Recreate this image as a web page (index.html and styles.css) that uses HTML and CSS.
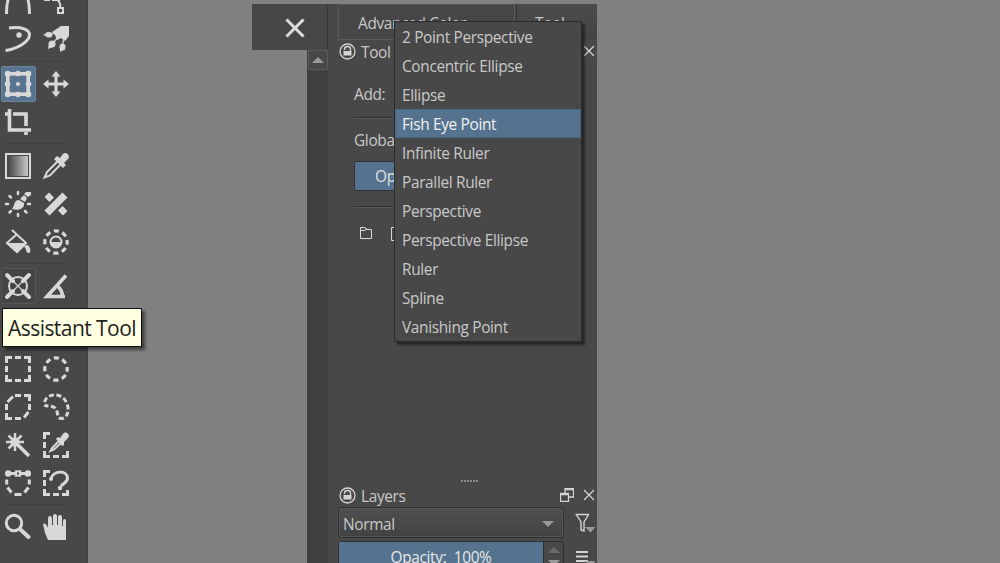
FILE: index.html
```
<!DOCTYPE html>
<html lang="en">
<head>
    <meta charset="utf-8">
    <title>Assistant Tool</title>
    <link rel="stylesheet" href="styles.css">
</head>
<body>
<div class="workspace">

    <!-- Toolbox -->
    <div class="toolbox">
        <div class="tool-group">
            <button class="tool"><svg viewBox="-13 -13 26 26"><path d="M-11.500 13C-11.5-7-6-11 0-11S11.500-7 11.500 13"/></svg></button>
            <button class="tool"><svg viewBox="-13 -13 26 26"><path d="M-12-1.500h6M-4-1.500h8"/><path class="mid" d="M2-1Q4.500 2 4.500 7"/><rect class="mid" x="2" y="7" width="5" height="5"/></svg></button>
            <button class="tool"><svg viewBox="-13 -13 26 26"><path d="M-9-11C4-13 11.500-9 11.500-4.500 11.500 3-1 10-12.500 11.500"/><circle class="fill" cx="1" cy="-4" r="2.700"/></svg></button>
            <button class="tool">
                <svg viewBox="-13 -13 26 26">
                    <path class="fill" d="M5-13H13V-3L9 2 5-1 1 1-1-4-4-7Z"/>
                    <path class="thin" d="M1-7L-4-5M3-3L-2 3M8-1L6.500 6"/>
                    <ellipse class="fill" cx="-7" cy="-4.200" rx="3.500" ry="2.800"/><path class="fill" d="M-13-4L-8-7V-2Z"/>
                    <ellipse class="fill" cx="-4" cy="5" rx="3.500" ry="3.500"/><path class="fill" d="M-8 10L-7 4-3 8Z"/>
                    <ellipse class="fill" cx="6.500" cy="8" rx="3" ry="3.500"/><path class="fill" d="M4 13L4 8 9 10Z"/>
                </svg>
            </button>
        </div>
        <div class="tool-group">
            <button class="tool selected"><svg viewBox="-13 -13 26 26"><rect class="frame" x="-10.200" y="-10.200" width="20.400" height="20.400"/><g class="fill"><circle cx="-10.300" cy="-10.300" r="3"/><circle cx="0" cy="-10.500" r="2.800"/><circle cx="10.300" cy="-10.300" r="3"/><circle cx="-10.500" cy="0" r="2.800"/><circle cx="10.500" cy="0" r="2.800"/><circle cx="-10.300" cy="10.300" r="3"/><circle cx="0" cy="10.500" r="2.800"/><circle cx="10.300" cy="10.300" r="3"/><circle cx="0" cy="0" r="2.100"/></g></svg></button>
            <button class="tool"><svg viewBox="-13 -13 26 26"><path d="M0-9V9M-9 0H9"/><path class="fill" d="M0-13L4.500-7.500H-4.500ZM0 13L4.500 7.500H-4.500ZM-13 0L-7.500-4.500V4.500ZM13 0L7.500-4.500V4.500Z"/></svg></button>
            <button class="tool"><svg viewBox="-13 -13 26 26"><path class="frame" d="M-8.500-13V8H13M-13-8H-10M-5-8H8V4M8 10V13"/></svg></button>
        </div>
        <div class="tool-group">
            <button class="tool">
                <svg viewBox="-13 -13 26 26">
                    <defs><linearGradient id="fade"><stop offset="0" stop-color="#454545"/><stop offset="1" stop-color="#c8c8c8"/></linearGradient></defs>
                    <rect class="mid" x="-12" y="-12" width="24" height="24"/>
                    <rect class="gradient" x="-10" y="-10" width="20" height="20" fill="url(#fade)"/>
                </svg>
            </button>
            <button class="tool"><svg viewBox="-13 -13 26 26"><path class="mid" d="M2-5L-9 6-11.500 11.500-6 9.500 5-2"/><path class="fill" d="M-2-7L1-10 4-8 7-12C10-15 15-10 12-7L8-3 10-1 7 2Z"/></svg></button>
            <button class="tool"><svg viewBox="-13 -13 26 26"><path class="dots" d="M0-10V-12M-7-6.500L-8.500-8M-10 0H-12M-7 7L-8.500 8.500M0 10V12M7 7L8.500 8.500M10 0H12"/><path class="fill" d="M-6 5C-3 1-4-4 1-4L6-1C7 5 0 7-6 5ZM2-5L6-9 9-6 7-2ZM6-10L8-12H13V-9L10-7Z"/></svg></button>
            <button class="tool"><svg viewBox="-13 -13 26 26"><path class="fill" d="M-11.500 6.500L6.500-11.500 11.500-6.500-6.500 11.500ZM-11.500-7L-7-11.500-2-6.500-6.500-2ZM2 6.500L6.500 2 11.500 7 7 11.500Z"/></svg></button>
            <button class="tool"><svg viewBox="-13 -13 26 26"><path class="mid" d="M-6-12L8 1-1 10-11 1-1-8"/><path class="fill" d="M-12 1H9L-1 11ZM10 3C13 6 13 11 10.500 11 8 11 9 8 6 4Z"/></svg></button>
            <button class="tool"><svg viewBox="-13 -13 26 26"><circle class="ring" r="11.200"/><circle class="mid" r="5.500"/><path class="fill" d="M-6 0H6A6 6 0 0 1-6 0Z"/></svg></button>
        </div>
        <div class="tool-group">
            <button class="tool hovered"><svg viewBox="-13 -13 26 26"><circle class="mid" r="9"/><path class="thin" d="M-11-11L11 11M11-11L-11 11"/><path class="heavy" d="M-11-11L-5-5M11-11L5-5M-11 11L-5 5M11 11L5 5"/></svg></button>
            <button class="tool"><svg viewBox="-13 -13 26 26"><path class="frame" d="M10-10.500L-9 10.500H9M0-1Q6 3 6.500 10"/></svg></button>
            <button class="tool"></button>
            <button class="tool"></button>
        </div>
        <div class="tool-group">
            <button class="tool"><svg viewBox="-13 -13 26 26"><path d="M-11.500-6V-11.500H-6M6-11.500H11.500V-6M11.500 6V11.500H6M-6 11.500H-11.500V6M-3-11.500H3M11.500-3V3M-3 11.500H3M-11.500-3V3"/></svg></button>
            <button class="tool"><svg viewBox="-13 -13 26 26"><circle class="ring" r="11.200"/></svg></button>
            <button class="tool"><svg viewBox="-13 -13 26 26"><path d="M-3-11.500H3M6-11.500H11.500V-6M11.500-3V3M10.500 5L6 10.500M3 11.500H-3M-6 11.500H-11.500V6M-11.500 3V-3M-10.500-5L-5-10.500"/></svg></button>
            <button class="tool"><svg viewBox="-13 -13 26 26"><path class="lasso" d="M-11.500-5C-9-14 4-14 9-7 14 0 13 10 6 11.500 0 12 3 5-1 1-4-2-9 0-11.500-2"/></svg></button>
            <button class="tool"><svg viewBox="-13 -13 26 26"><path class="wand" d="M-3-12V6M-12-3H6M-9.500-9.500L3 3M3.500-9.500L-9.500 3.500"/><path class="frame" d="M-2-2L11 11"/><circle class="fill" cx="-3" cy="-3" r="4.500"/></svg></button>
            <button class="tool"><svg viewBox="-13 -13 26 26"><path d="M-11.500-6V-11.500H-6M-11.500-3V3M-11.500 6V11.500H-6M-3 11.500H3M6 11.500H11.500V6"/><path class="mid" d="M3-4L-4 3-5.500 6-2 4.500 5-2"/><path class="fill" d="M0-6L2-8 4-7 7-11C10-15 15-10 12-7L8-3 8 0 6 1Z"/></svg></button>
            <button class="tool"><svg viewBox="-13 -13 26 26"><path d="M-10-9.500H10M-11.300-3.500V1.500M-10.500 4.500L-6.500 9.500M-3.500 11.500H3.500M6.500 9.500L10.500 4.500M11.300 1.500V-3.500"/><g class="fill"><circle cx="-9.800" cy="-9.500" r="3.200"/><circle cx="9.800" cy="-9.500" r="3.200"/><rect x="-3.200" y="-12.700" width="6.400" height="6.400"/></g><rect x="-1" y="-10.500" width="2" height="2" class="hole"/></svg></button>
            <button class="tool"><svg viewBox="-13 -13 26 26"><path d="M-11.500-6V-11.500H-6M-11.500-3V3M-11.500 6V11.500H-6M-3 11.500H3M6 11.500H11.500V7M-5-4C-3-13 11-13 11.500-5 11.500-1 8 0 5 3"/><circle class="fill" cx="4" cy="5" r="2.200"/><circle class="fill" cx="-5" cy="-4" r="2"/></svg></button>
        </div>
        <div class="tool-group">
            <button class="tool"><svg viewBox="-13 -13 26 26"><circle cx="-4" cy="-4" r="7.700"/><path class="heavy" d="M3 3L10.500 10"/></svg></button>
            <button class="tool"><svg viewBox="-13 -13 26 26"><path class="fill" d="M-13-3Q-10-5-8 1V-8Q-8-11-6-11T-4-8V-2H-3V-11Q-3-13-1-13T1-11V-2H2V-10Q2-12 4-12T6-10V-1H7V-6Q7-8 8.500-8T10-6V13H-8L-11 6Z"/></svg></button>
        </div>
        <div class="tooltip">Assistant Tool</div>
    </div>

    <!-- Window close button and scroll bar -->
    <div class="dock-edge">
        <button class="window-close"><svg width="20" height="20" viewBox="0 0 20 20"><path d="M1.500 1.500L18.500 18.500M18.500 1.500L1.500 18.500"/></svg></button>
        <div class="scrollbar"><button class="scroll-up"><i class="arrow up"></i></button></div>
    </div>

    <!-- Dockers -->
    <div class="dock">
        <div class="tabs">
            <div class="tab active">Advanced Color</div>
            <div class="tab">Tool</div>
        </div>
        <div class="docker-title">
            <svg class="lock" width="17" height="17" viewBox="0 0 17 17"><circle cx="8.500" cy="8.500" r="7.500"/><path d="M5.500 7V6Q5.500 3.500 8.500 3.500T11.500 6V8"/><rect x="4.500" y="8" width="8" height="4.500"/></svg>
            <span>Tool Options</span>
            <svg class="close" width="12" height="12" viewBox="0 0 12 12"><path d="M1 1L11 11M11 1L1 11"/></svg>
        </div>
        <div class="options">
            <div class="add">Add:</div>
            <hr>
            <div class="global">Global Color:</div>
            <div class="opacity">Opacity: 100%</div>
            <hr>
            <div class="files">
                <svg width="12" height="12" viewBox="0 0 12 12"><path d="M.5 .5H5L6 2.500H11.500V11.500H.5Z"/><path d="M.5 3.500H5L6.500 1.500"/></svg>
                <svg width="14" height="14" viewBox="0 0 14 14"><path d="M.5 .5H13.500V13.500H.5Z"/></svg>
            </div>
        </div>

        <div class="grip"><i></i><i></i><i></i><i></i><i></i><i></i></div>
        <div class="docker-title">
            <svg class="lock" width="17" height="17" viewBox="0 0 17 17"><circle cx="8.500" cy="8.500" r="7.500"/><path d="M5.500 7V6Q5.500 3.500 8.500 3.500T11.500 6V8"/><rect x="4.500" y="8" width="8" height="4.500"/></svg>
            <span>Layers</span>
            <svg class="float" width="14" height="14" viewBox="0 0 14 14"><path d="M5 5V.5H13.500V9H9M5 1.500H13"/><path d="M.5 5.500H8.500V13.500H.5ZM.5 6.500H8"/></svg>
            <svg class="close" width="12" height="12" viewBox="0 0 12 12"><path d="M1 1L11 11M11 1L1 11"/></svg>
        </div>
        <div class="layer-rows">
            <div class="layer-row">
                <div class="select">Normal<i class="arrow down"></i></div>
                <svg class="row-icon" width="21" height="20" viewBox="0 0 21 20"><path d="M.5 1.500H14M1 1L6 9V17L9 18V9L14 1"/><path class="mark" d="M10 14H20.500L15.500 19.500Z"/></svg>
            </div>
            <div class="layer-row">
                <div class="slider"><div class="slider-bar">Opacity: &nbsp;100%</div><div class="spin"><i class="arrow up"></i><i class="arrow down"></i></div></div>
                <svg class="row-icon menu-icon" width="21" height="20" viewBox="0 0 21 20"><path class="lines" d="M1 2H13M1 6.500H13M1 11H13"/><path class="mark" d="M10 11H20.500L15.500 16.500Z"/></svg>
            </div>
        </div>

        <!-- Assistant type menu -->
        <ul class="menu">
            <li>2 Point Perspective</li>
            <li>Concentric Ellipse</li>
            <li>Ellipse</li>
            <li class="current">Fish Eye Point</li>
            <li>Infinite Ruler</li>
            <li>Parallel Ruler</li>
            <li>Perspective</li>
            <li>Perspective Ellipse</li>
            <li>Ruler</li>
            <li>Spline</li>
            <li>Vanishing Point</li>
        </ul>
    </div>
</div>
</body>
</html>
```
FILE: styles.css
```
* {
    box-sizing: border-box;
}

body {
    margin: 0;
    height: 563px;
    overflow: hidden;
    background: #808080;
    color: #c8c8c8;
    font-family: "Open Sans", "Noto Sans", sans-serif;
    font-size: 15.400px;
    letter-spacing: -0.330px;
}

button {
    padding: 0;
    border: 0;
    background: none;
}

svg {
    display: block;
    flex: none;
}

.workspace {
    display: flex;
    height: 563px;
    overflow: hidden;
}

/* Toolbox */
.toolbox {
    position: relative;
    width: 88px;
    height: 563px;
    margin-right: 164px;
    background: #484848;
    border-right: 1px solid #434343;
}

.tool-group {
    display: grid;
    grid-template-columns: 38px 38px;
    grid-auto-rows: 38px;
    position: relative;
    margin-bottom: 6.400px;
    margin-left: -1px;
}

.tool-group:first-child {
    margin-top: -17.700px;
}

/* Line between the groups */
.tool-group + .tool-group::before {
    content: "";
    position: absolute;
    top: -4px;
    left: 7px;
    width: 62px;
    height: 1px;
    background: #3f3f3f;
}

.tool {
    display: flex;
    align-items: center;
    justify-content: center;
    width: 35px;
    height: 36px;
    margin: 1px 1px 1px 2px;
    border: 1px solid transparent;
    border-radius: 2px;
}

.tool svg {
    width: 26px;
    height: 26px;
    margin-left: -1.400px;
    overflow: visible;
    fill: none;
    stroke: #d8d8d8;
    stroke-width: 3;
}

.tool .fill {
    fill: #d8d8d8;
    stroke: none;
}

.tool .thin {
    stroke-width: 1.200;
}

.tool .mid {
    stroke-width: 2;
}

.tool .wand {
    stroke-width: 2.500;
}

.tool .frame {
    stroke-width: 3.600;
}

.tool .heavy {
    stroke-width: 4;
    stroke-linecap: round;
}

.tool .gradient {
    stroke: none;
}

.tool .dots {
    stroke-width: 2.500;
    stroke-linecap: round;
}

.tool .ring {
    stroke-width: 3.200;
    stroke-dasharray: 5.200 3.600;
    stroke-dashoffset: 2.600;
}

.tool .lasso {
    stroke-dasharray: 5 2.500;
}

.tool .hole {
    fill: #484848;
    stroke: none;
}

.selected {
    background: #58748f;
    border-color: #6987a3;
}

.hovered {
    background: #444;
    border-color: #565656;
}

.tooltip {
    position: absolute;
    top: 308px;
    left: 2px;
    width: 140px;
    height: 39px;
    padding-left: 5px;
    background: #ffffe1;
    border: 1px solid #111;
    color: #222;
    box-shadow: 3px 3px 3px rgba(0, 0, 0, 0.5);
    font-size: 21px;
    letter-spacing: -0.550px;
    line-height: 39px;
    white-space: nowrap;
}

/* Strip left of the dockers */
.dock-edge {
    width: 76px;
    padding-top: 4px;
}

.window-close {
    display: flex;
    align-items: center;
    justify-content: center;
    width: 76px;
    height: 46px;
    padding-left: 10px;
    padding-top: 1px;
    background: #474747;
    border-right: 1px solid #383838;
}

.window-close path {
    fill: none;
    stroke: #ddd;
    stroke-width: 3;
}

.scrollbar {
    width: 21px;
    height: 513px;
    margin-left: 55px;
    background: #404040;
}

.scroll-up {
    display: flex;
    align-items: center;
    justify-content: center;
    width: 20px;
    height: 20px;
    margin-left: 1px;
    background: #484848;
    border: 1px solid #5a5a5a;
}

.arrow {
    width: 0;
    height: 0;
    border: 6px solid transparent;
}

.arrow.up {
    border-top: 0;
    border-bottom-color: #999;
}

.arrow.down {
    border-bottom: 0;
    border-top-color: #999;
}

/* Dockers */
.dock {
    position: relative;
    width: 269px;
    height: 559px;
    margin-top: 4px;
    background: #484848;
    border-left: 1px solid #444;
}

.tabs {
    display: flex;
    gap: 1px;
    height: 36px;
    padding-left: 9px;
    line-height: 39px;
}

.tab {
    flex: 1;
    padding-left: 18px;
    background: linear-gradient(#4b4b4b, #454545);
    border-left: 1px solid #353535;
}

.tab.active {
    flex: none;
    width: 177px;
    padding-left: 19px;
    background: #464646;
    border: 1px solid #5a5a5a;
    border-radius: 2px 2px 0 0;
    line-height: 38px;
}

.docker-title {
    display: flex;
    align-items: center;
    height: 22px;
    padding: 0 2px 0 10px;
}

.docker-title span {
    flex: 1;
    padding: 2px 0 0 5px;
}

.docker-title svg {
    fill: none;
    stroke: #d4d4d4;
    stroke-width: 1.300;
}

.lock rect {
    fill: #d4d4d4;
    stroke: none;
}

.float {
    margin-right: 9px;
}

.options {
    height: 407px;
    padding: 17px 25px 0 25px;
}

.options hr {
    height: 2px;
    margin: 0;
    border: 0;
    border-top: 1px solid #303030;
    background: #585858;
}

.add {
    height: 38px;
    line-height: 31px;
}

.global {
    height: 42px;
    line-height: 43px;
}

.opacity {
    width: 190px;
    height: 30px;
    margin-bottom: 15px;
    padding-left: 20px;
    background: #55738e;
    border: 1px solid #333;
    border-radius: 2px;
    color: #e0e0e0;
    line-height: 29px;
}

.files {
    display: flex;
    gap: 19px;
    padding: 19px 0 0 6px;
}

.files path {
    fill: none;
    stroke: #d8d8d8;
}

/* Handle between the two dockers */
.grip {
    display: flex;
    gap: 1px;
    height: 4px;
    margin-top: 11px;
    padding-left: 132px;
}

.grip i {
    width: 2px;
    height: 2px;
    background: #8c8c8c;
}

.layer-rows {
    padding: 1px 0 0 9px;
}

.layer-row {
    display: flex;
    gap: 11px;
    height: 34px;
}

.select {
    display: flex;
    align-items: center;
    justify-content: space-between;
    width: 226px;
    height: 31px;
    padding: 3px 9px 0 4px;
    background: linear-gradient(#505050, #424242);
    border: 1px solid #313131;
    border-radius: 3px;
    box-shadow: inset 0 0 0 1px #565656;
}

.row-icon {
    margin-top: 6px;
    fill: none;
    stroke: #d4d4d4;
    stroke-width: 1.400;
}

.row-icon .mark {
    fill: #999;
    stroke: none;
}

.menu-icon {
    margin-top: 9px;
}

.lines {
    stroke-width: 2;
}

.slider {
    display: flex;
    width: 226px;
    height: 31px;
    border: 1px solid #313131;
    border-radius: 3px;
}

.slider-bar {
    width: 205px;
    background: #55738e;
    color: #e8e8e8;
    line-height: 32px;
    text-align: center;
}

.spin {
    display: flex;
    flex-direction: column;
    gap: 7px;
    width: 20px;
    padding: 5px 0 0 4px;
    border-left: 1px solid #313131;
}

.spin .up {
    border-bottom-color: #6c6c6c;
}

/* Drop-down menu */
.menu {
    position: absolute;
    top: 17px;
    left: 65px;
    width: 188px;
    height: 321px;
    margin: 0;
    padding: 0;
    list-style: none;
    background: #484848;
    border: 1px solid #2b2b2b;
    box-shadow: 3px 3px 2px rgba(0, 0, 0, 0.450);
}

.menu li {
    height: 29px;
    padding-left: 6px;
    border: 1px solid transparent;
    line-height: 30px;
}

.menu .current {
    background: #55738e;
    border-color: #456785;
    color: #f0f0f0;
}
```
